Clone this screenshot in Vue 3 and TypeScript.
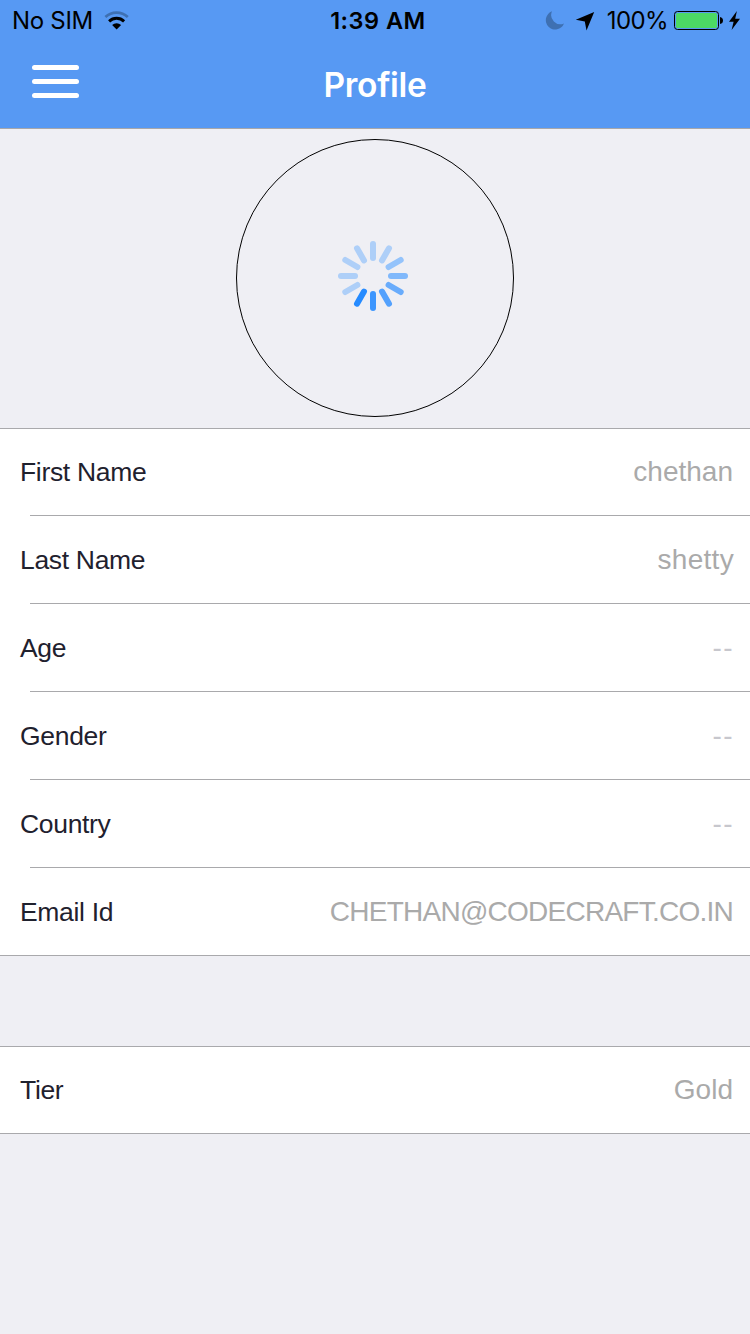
<script setup lang="ts">
interface Row {
  label: string
  value: string
  kind: string
}

const details: Row[] = [
  { label: 'First Name', value: 'chethan', kind: 'name' },
  { label: 'Last Name', value: 'shetty', kind: 'surname' },
  { label: 'Age', value: '--', kind: 'empty' },
  { label: 'Gender', value: '--', kind: 'empty' },
  { label: 'Country', value: '--', kind: 'empty' },
  { label: 'Email Id', value: 'CHETHAN@CODECRAFT.CO.IN', kind: 'email' },
]

// Spoke colours, clockwise from the top
const spokes: string[] = [
  '#aecff8', '#aecff8', '#94c3fb', '#80b8fb', '#69acfc', '#53a1fd',
  '#3d96fe', '#268bff', '#aecff8', '#aecff8', '#aecff8', '#aecff8',
]
</script>

<template>
  <div class="screen">
    <header class="header">
      <div class="status">
        <div class="side">
          <span class="carrier">No SIM</span>
          <svg class="wifi" width="26" height="20" viewBox="0 0 26 20">
            <path d="M1.4 6.1 A16.5 16.5 0 0 1 23.8 6.1" fill="none" stroke="#3e70b2" stroke-width="2.7" />
            <path d="M5.1 10.3 A11 11 0 0 1 20.1 10.3" fill="none" stroke="#000" stroke-width="3" />
            <path d="M8.1 14 A6.6 6.6 0 0 1 17.1 14 L12.6 18.6 Z" fill="#000" />
          </svg>
        </div>
        <span class="clock">1:39 AM</span>
        <div class="side right">
          <svg class="moon" width="20" height="20" viewBox="0 0 20 20">
            <path d="M7 .3 A9.4 9.4 0 1 0 19 12.5 A9.2 9.2 0 0 1 7 .3 Z" fill="#3e70b2" />
          </svg>
          <svg class="arrow" width="20" height="20" viewBox="0 0 20 20">
            <path d="M19.2 1 L.8 8.7 L9.8 10.4 L11.5 19.4 Z" fill="#000" />
          </svg>
          <span class="percent">100%</span>
          <svg class="battery" width="50" height="20" viewBox="0 0 50 20">
            <rect x=".5" y=".5" width="44" height="18" rx="3" fill="none" stroke="#000" stroke-width="1" />
            <rect x="2" y="2" width="41" height="15" rx="1.5" fill="#4cd964" />
            <path d="M46 6 Q49 6.5 49 9.5 Q49 12.5 46 13 Z" fill="#000" />
          </svg>
          <svg class="bolt" width="12" height="20" viewBox="0 0 12 20">
            <path d="M8.9 0 L1 10.8 L5.6 10.8 L3.6 19 L12 7.8 L7.2 7.8 Z" fill="#000" />
          </svg>
        </div>
      </div>
      <nav class="nav">
        <button class="menu" aria-label="Menu"><i></i><i></i><i></i></button>
        <h1 class="title">Profile</h1>
      </nav>
    </header>

    <section class="photo">
      <div class="circle">
        <svg class="spinner" width="72" height="72" viewBox="-36 -36 72 72">
          <line
            v-for="(color, i) in spokes"
            :key="i"
            x1="0" y1="-32" x2="0" y2="-18"
            :stroke="color"
            stroke-width="6"
            stroke-linecap="round"
            :transform="`rotate(${i * 30})`"
          />
        </svg>
      </div>
    </section>

    <section class="group">
      <div v-for="row in details" :key="row.label" class="row">
        <span class="label">{{ row.label }}</span>
        <span class="value" :class="row.kind">{{ row.value }}</span>
      </div>
    </section>

    <section class="group tier">
      <div class="row">
        <span class="label">Tier</span>
        <span class="value">Gold</span>
      </div>
    </section>
  </div>
</template>

<style>
body {
  margin: 0;
}
</style>

<style scoped>
.screen {
  width: 750px;
  height: 1334px;
  overflow: hidden;
  background: #efeff4;
  font-family: "Liberation Sans", Arial, sans-serif;
}
.header {
  box-sizing: border-box;
  height: 129px;
  background: #5799f3;
  border-bottom: 1px solid #a7a7aa;
  font-family: Inter, "Liberation Sans", sans-serif;
}
.status {
  display: grid;
  grid-template-columns: 1fr auto 1fr;
  align-items: center;
  height: 41px;
  padding: 0 10px 0 12px;
  font-size: 24px;
  line-height: 41px;
  color: #000;
}
.side {
  display: flex;
  align-items: center;
}
.right {
  justify-content: flex-end;
}
.carrier {
  width: 80px;
  white-space: nowrap;
  letter-spacing: -0.3px;
}
.wifi {
  margin-left: 12px;
}
.clock {
  padding-left: 4px;
  font-size: 23.5px;
  font-weight: 600;
  letter-spacing: 0.5px;
}
.moon {
  margin-right: 10px;
}
.arrow {
  margin-right: 12px;
}
.percent {
  letter-spacing: -0.6px;
}
.battery {
  margin-left: 6px;
}
.bolt {
  margin-left: 4px;
}
.nav {
  display: grid;
  grid-template-columns: 1fr auto 1fr;
  align-items: center;
  height: 87px;
  padding: 0 32px;
}
.menu {
  display: flex;
  flex-direction: column;
  gap: 9px;
  width: 47px;
  margin: -8px 0 0;
  padding: 0;
  border: 0;
  background: none;
}
.menu i {
  width: 47px;
  height: 5px;
  border-radius: 2.5px;
  background: #fff;
}
.title {
  margin: 0;
  font-size: 33.5px;
  font-weight: 600;
  letter-spacing: -0.3px;
  line-height: 88px;
  color: #fff;
}
.photo {
  display: flex;
  justify-content: center;
  height: 289px;
  padding-top: 10px;
}
.circle {
  box-sizing: border-box;
  display: flex;
  align-items: center;
  justify-content: center;
  width: 278px;
  height: 278px;
  padding: 0 4px 4px 0;
  border: 1px solid #000;
  border-radius: 50%;
}
.group {
  border-top: 1px solid #a9a9ac;
  border-bottom: 1px solid #a9a9ac;
  background: #fff;
}
.tier {
  margin-top: 90px;
}
.row {
  display: flex;
  align-items: center;
  justify-content: space-between;
  height: 86px;
  padding: 0 17px 0 20px;
}
.row + .row {
  height: 87px;
  background: linear-gradient(#a9a9ac, #a9a9ac) 30px 0 / 720px 1px no-repeat;
  padding-top: 1px;
}
.label {
  padding-top: 1px;
  font-size: 26.5px;
  letter-spacing: -0.32px;
  color: #1f212e;
}
.value {
  font-size: 28px;
  letter-spacing: 0;
  color: #aaa;
}
.surname {
  margin-right: -1px;
  letter-spacing: 0.3px;
}
.empty {
  margin-right: -1px;
  letter-spacing: 1.4px;
  color: #c7c7cd;
}
.email {
  letter-spacing: -0.75px;
}
</style>
